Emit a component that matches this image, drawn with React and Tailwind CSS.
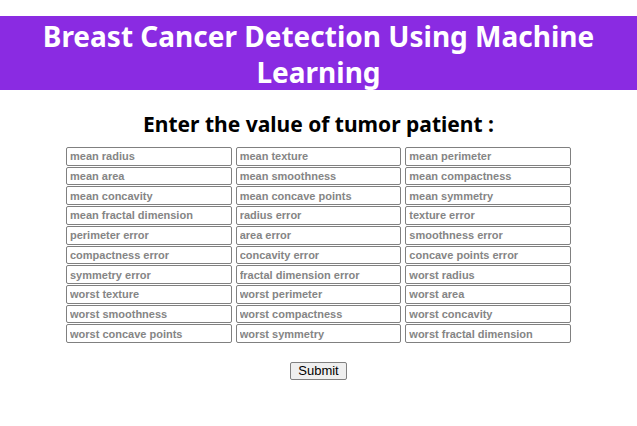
const features = [
  "mean radius", "mean texture", "mean perimeter",
  "mean area", "mean smoothness", "mean compactness",
  "mean concavity", "mean concave points", "mean symmetry",
  "mean fractal dimension", "radius error", "texture error",
  "perimeter error", "area error", "smoothness error",
  "compactness error", "concavity error", "concave points error",
  "symmetry error", "fractal dimension error", "worst radius",
  "worst texture", "worst perimeter", "worst area",
  "worst smoothness", "worst compactness", "worst concavity",
  "worst concave points", "worst symmetry", "worst fractal dimension",
];

export default function App() {
  return (
    <main className="bg-white pt-4 font-['Noto_Sans','Open_Sans',sans-serif] text-black">
      <h1 className="bg-[#8a2be2] px-8 pt-0.5 text-center text-[28px] leading-9 font-bold text-white">
        Breast Cancer Detection Using Machine Learning
      </h1>
      <h2 className="mt-5 text-center text-[21px] leading-7 font-bold">
        Enter the value of tumor patient :
      </h2>
      <form
        className="mt-[9px] flex flex-col items-center font-['Liberation_Sans',Arial,sans-serif]"
        onSubmit={(e) => e.preventDefault()}
      >
        <div className="grid h-[196px] w-full max-w-[505px] auto-rows-fr grid-cols-3 gap-x-1 gap-y-px">
          {features.map((name) => (
            <input
              key={name}
              type="text"
              name={name}
              aria-label={name}
              placeholder={name}
              className="h-full w-full min-w-0 rounded-xs border border-[#808080] bg-white px-[3px] text-[11px] font-bold placeholder:text-[#858585]"
            />
          ))}
        </div>
        <button
          type="submit"
          className="mt-[19px] h-[18px] rounded-xs border border-[#808080] bg-[#efefef] px-[7px] text-[13px] leading-4"
        >
          Submit
        </button>
      </form>
    </main>
  );
}
